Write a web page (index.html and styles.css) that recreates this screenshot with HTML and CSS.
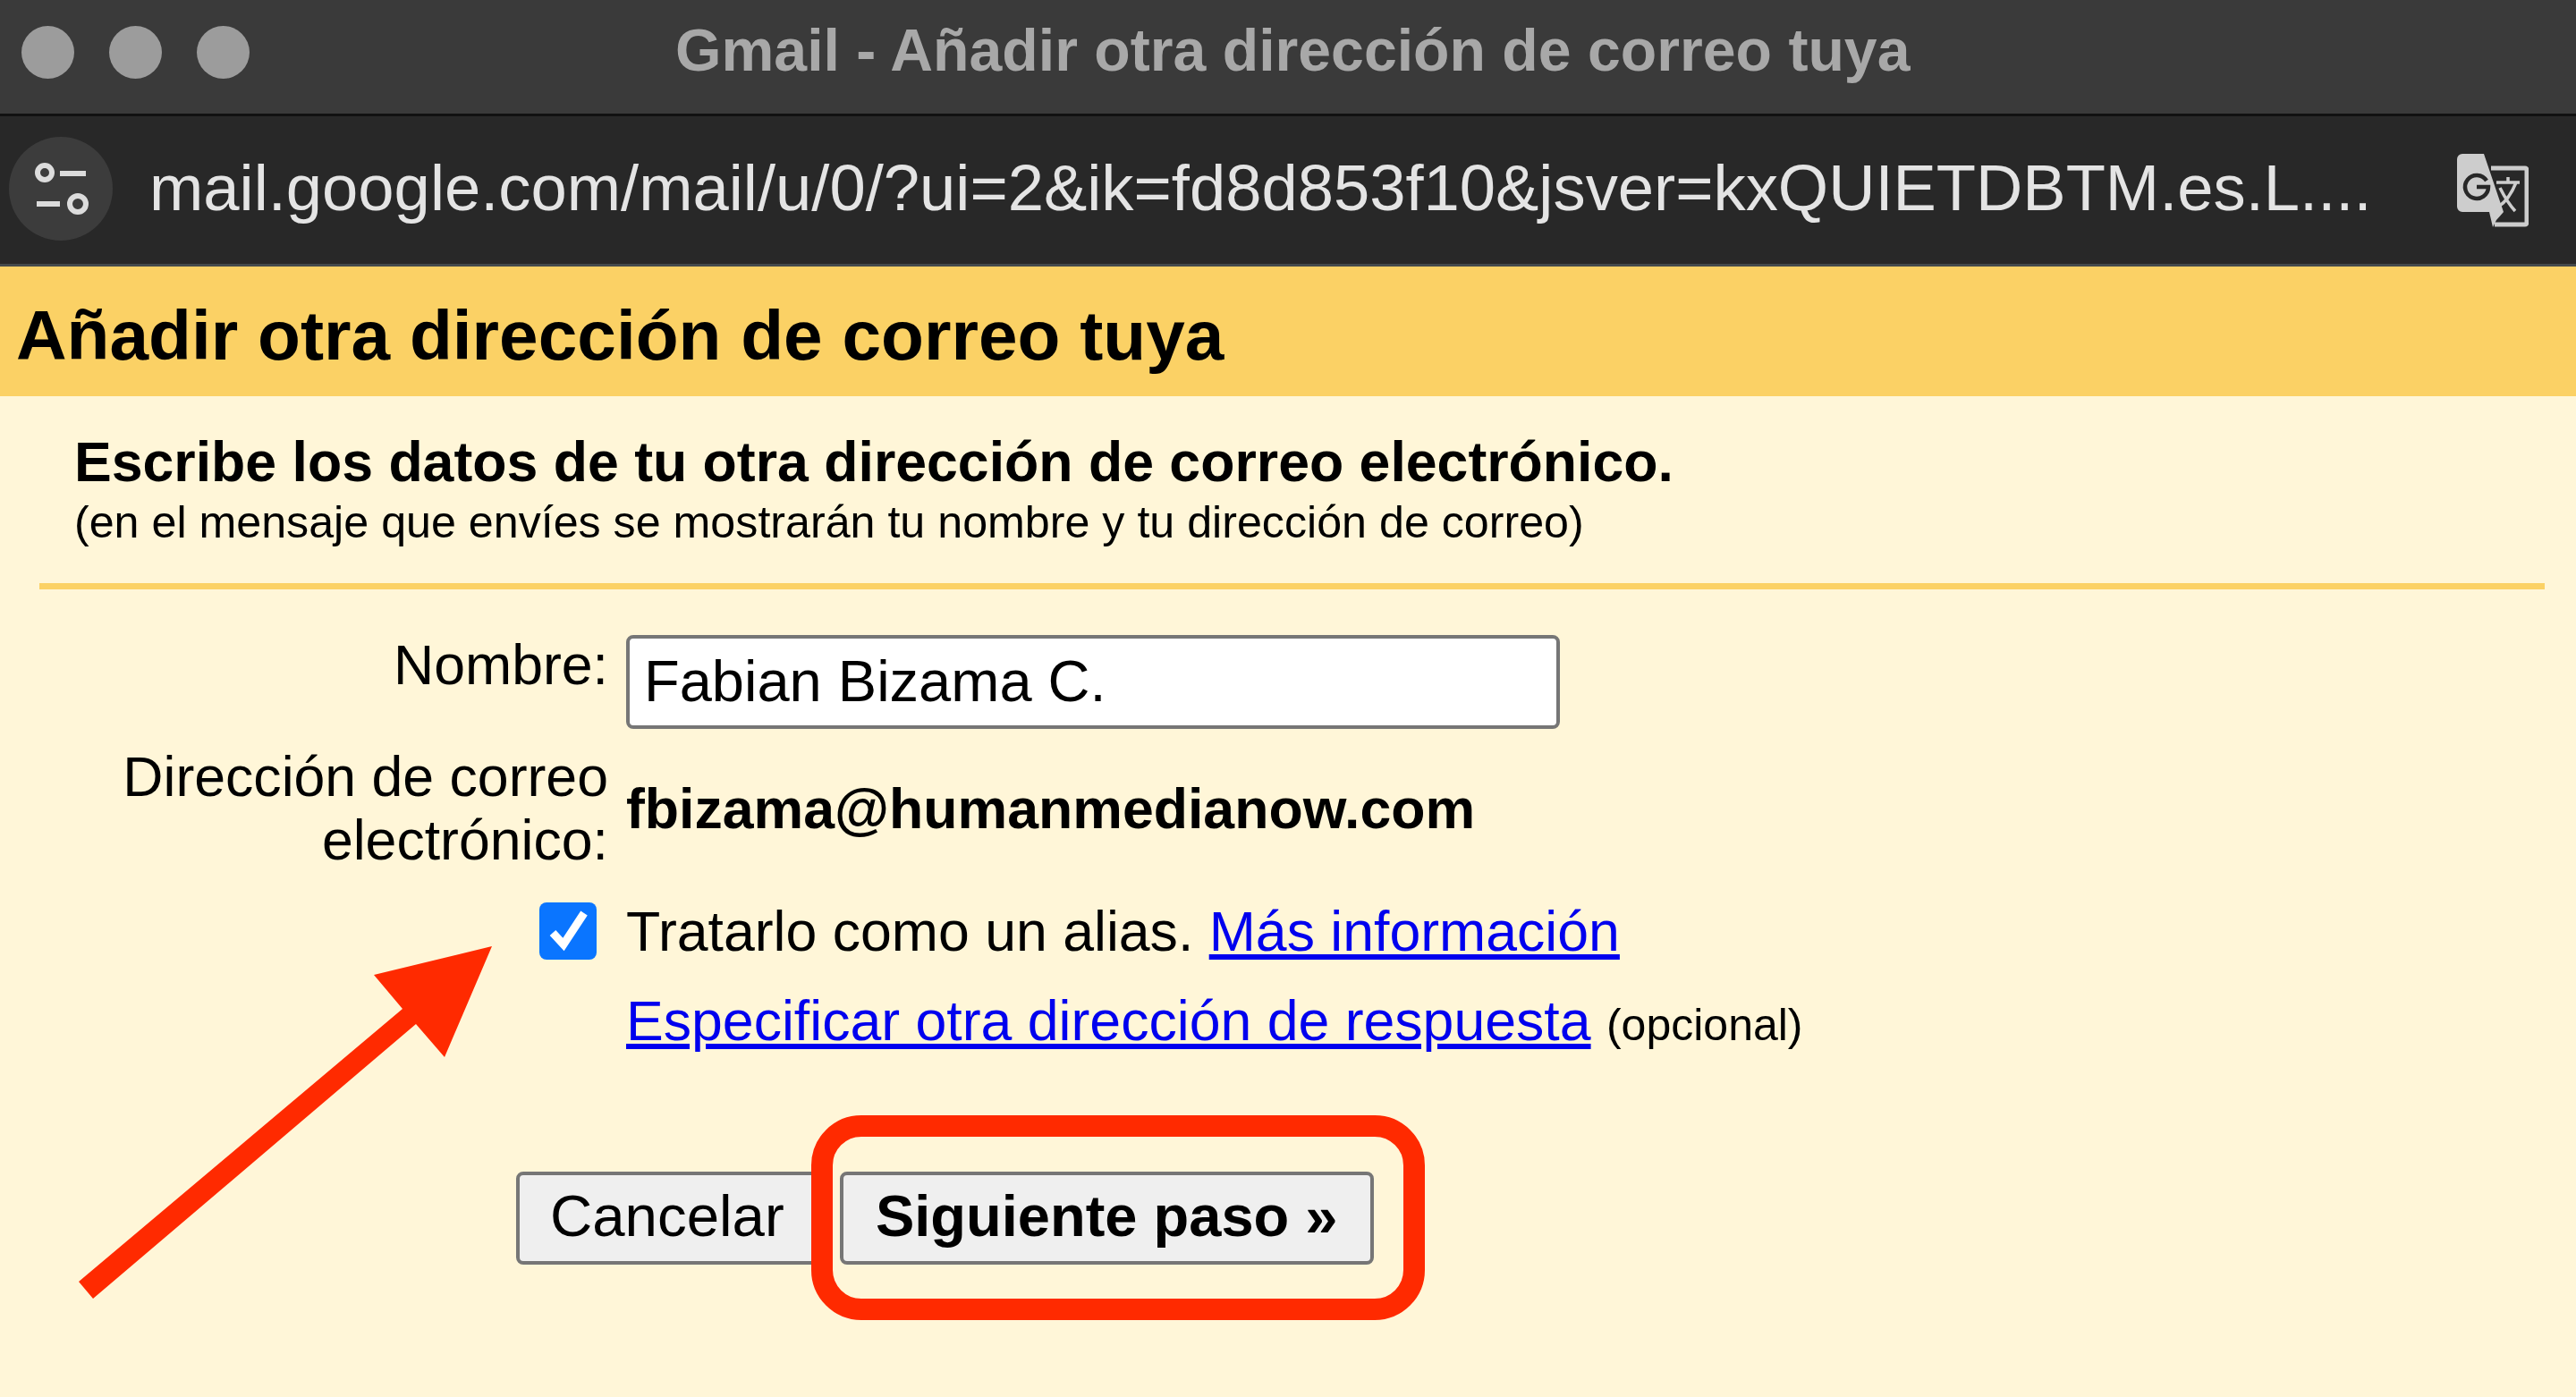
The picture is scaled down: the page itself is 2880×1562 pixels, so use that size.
FILE: index.html
```html
<!DOCTYPE html>
<html lang="es">

<head>
  <meta charset="UTF-8">
  <title>Gmail - Añadir otra dirección de correo tuya</title>
  <link rel="stylesheet" href="styles.css">
</head>

<body>
  <div class="titlebar">
    <div class="lights">
      <span class="light"></span>
      <span class="light"></span>
      <span class="light"></span>
    </div>
    <div class="titlebar__text">Gmail - Añadir otra dirección de correo tuya</div>
  </div>

  <div class="urlbar">
    <div class="site_icon">
      <svg width="116" height="116" viewBox="0 0 116 116" fill="none" stroke="#dcdcdc" stroke-width="6">
        <circle cx="40" cy="40" r="8" />
        <path d="M57 41h29" />
        <path d="M31 75h26" />
        <circle cx="77" cy="75" r="9" />
      </svg>
    </div>
    <div class="urlbar__text">mail.google.com/mail/u/0/?ui=2&amp;ik=fd8d853f10&amp;jsver=kxQUIETDBTM.es.L....</div>
    <svg class="translate_icon" width="80" height="82" viewBox="0 0 80 82">
      <path d="M38 16H76a2 2 0 0 1 2 2V77a2 2 0 0 1-2 2H42" fill="#282828" stroke="#cdcdcd" stroke-width="5" />
      <path d="M6 0H30L52 65L44 74L40 82L36 65H6a6 6 0 0 1-6-6V6a6 6 0 0 1 6-6Z" fill="#cdcdcd" />
      <path d="M33 30A13 13 0 1 0 35 37H22" fill="none" stroke="#282828" stroke-width="4.5" />
      <path d="M44 32H70M57 26V32M66 32Q58 52 45 60M48 38Q56 54 65 64" fill="none" stroke="#cdcdcd" stroke-width="3.5" />
    </svg>
  </div>

  <div class="page_head">
    <h1>Añadir otra dirección de correo tuya</h1>
  </div>

  <div class="panel">
    <div class="intro">
      <h2>Escribe los datos de tu otra dirección de correo electrónico.</h2>
      <p>(en el mensaje que envíes se mostrarán tu nombre y tu dirección de correo)</p>
    </div>

    <form class="addr_form">
      <label class="addr_form__label label_name" for="name">Nombre:</label>
      <input class="text_input" type="text" id="name" value="Fabian Bizama C.">

      <div class="addr_form__label label_addr">Dirección de correo electrónico:</div>
      <div class="addr_value">fbizama@humanmedianow.com</div>

      <div class="check_cell">
        <span class="check_box">
          <svg width="64" height="64" viewBox="0 0 64 64" fill="none" stroke="#fff" stroke-width="9">
            <path d="M15 34L27 47L50 12" />
          </svg>
        </span>
      </div>
      <div class="alias_row">Tratarlo como un alias. <a href="#">Más información</a></div>

      <div class="reply_row"><a href="#">Especificar otra dirección de respuesta</a> <small>(opcional)</small></div>

      <div class="buttons">
        <button type="button" class="btn">Cancelar</button>
        <button type="button" class="btn btn_next">Siguiente paso »</button>
      </div>
    </form>

    <!-- annotations drawn on top of the screenshot -->
    <svg class="arrow" width="480" height="400" viewBox="0 0 480 400">
      <path d="M470 0L338 32L370 70L8 375L24 394L385 87L417 124Z" fill="#ff2a00" />
    </svg>
    <div class="ring"></div>
  </div>
</body>

</html>
```

FILE: styles.css
```css
* {
  box-sizing: border-box;
}

html,
body {
  height: 100%;
}

body {
  margin: 0;
  display: flex;
  flex-direction: column;
  overflow: hidden;
  background-color: #fff6d8;
  font-family: "Liberation Sans", Arial, sans-serif;
  color: #000;
}

.titlebar {
  display: flex;
  align-items: center;
  flex: none;
  height: 130px;
  padding-bottom: 11px;
  padding-left: 24px;
  background-color: #3a3a3a;
  border-bottom: 3px solid #111;
}

.lights {
  display: flex;
  gap: 39px;
}

.light {
  width: 59px;
  height: 59px;
  border-radius: 50%;
  background-color: #9c9c9c;
}

.titlebar__text {
  flex: 1;
  margin-left: 476px;
  margin-bottom: 4px;
  font-size: 66.2px;
  font-weight: 700;
  color: #a8a8a8;
}

.urlbar {
  display: flex;
  align-items: center;
  flex: none;
  height: 168px;
  padding: 0 53px 0 10px;
  background-color: #282828;
  border-bottom: 3px solid #454a4c;
}

.site_icon {
  flex: none;
  width: 116px;
  height: 116px;
  margin-bottom: 3px;
  border-radius: 50%;
  background-color: #3c3c3c;
}

.urlbar__text {
  flex: 1;
  margin-left: 41px;
  margin-bottom: 6px;
  font-size: 72.4px;
  color: #e4e4e4;
  white-space: nowrap;
}

.translate_icon {
  flex: none;
}

.page_head {
  display: flex;
  align-items: center;
  flex: none;
  height: 145px;
  padding-top: 10px;
  padding-left: 18px;
  background-color: #fbd165;
}

.page_head h1 {
  margin: 0;
  font-size: 78.4px;
  font-weight: 700;
}

.panel {
  position: relative;
  flex: 1;
  padding: 0 35px 0 44px;
}

.intro {
  padding: 40px 0 34px 39px;
  border-bottom: 7px solid #fbd165;
}

.intro h2 {
  margin: 0;
  font-size: 62.6px;
  line-height: 66px;
  font-weight: 700;
}

.intro p {
  margin: 1px 0 0;
  font-size: 50.2px;
  line-height: 68px;
}

.addr_form {
  display: grid;
  grid-template-columns: 636px 1fr;
  column-gap: 20px;
  padding-top: 51px;
  font-size: 62.6px;
}

.addr_form__label {
  text-align: right;
  line-height: 71px;
}

.label_name {
  margin-top: -2px;
}

.text_input {
  width: 1044px;
  height: 105px;
  padding: 0 16px 3px;
  border: 4px solid #767676;
  border-radius: 8px;
  background-color: #fff;
  font-family: inherit;
  font-size: 65px;
  color: #000;
}

.label_addr {
  margin-top: 18px;
}

.addr_value {
  align-self: center;
  margin-top: 18px;
  font-weight: 700;
}

.check_cell {
  display: flex;
  justify-content: flex-end;
  padding-right: 13px;
  margin-top: 34px;
}

.check_box {
  display: block;
  width: 64px;
  height: 64px;
  border-radius: 8px;
  background-color: #0a75ff;
}

.alias_row {
  margin-top: 34px;
  line-height: 64px;
}

.reply_row {
  grid-column: 2;
  margin-top: 32px;
  line-height: 72px;
}

.reply_row small {
  font-size: 50px;
}

.addr_form a {
  color: #0000ee;
}

.buttons {
  grid-column: 1 / 3;
  display: flex;
  gap: 24px;
  margin-top: 128px;
  padding-left: 533px;
}

.btn {
  height: 104px;
  padding: 0 34px 5px;
  border: 4px solid #767676;
  border-radius: 8px;
  background-color: #efefef;
  font-family: inherit;
  font-size: 65.4px;
  color: #000;
}

.btn_next {
  width: 597px;
  padding: 0 0 5px;
  font-size: 65px;
  font-weight: 700;
}

.arrow {
  position: absolute;
  left: 80px;
  top: 615px;
}

.ring {
  position: absolute;
  left: 907px;
  top: 804px;
  width: 686px;
  height: 229px;
  border: 24px solid #ff2a00;
  border-radius: 56px;
}
```
